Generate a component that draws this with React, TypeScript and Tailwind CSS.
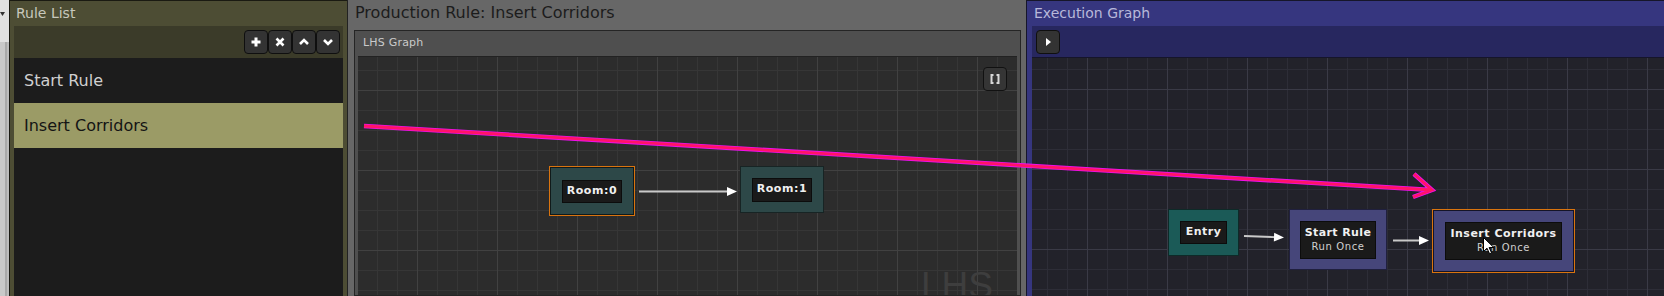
import React from "react";

const ToolBtn = ({ children }: { children: React.ReactNode }) => (
  <div className="w-[24px] h-[24px] rounded-[4px] border border-[#0f0f0f] bg-[#333333] flex items-center justify-center">
    {children}
  </div>
);

const Arrow = ({ x1, y1, x2, y2 }: { x1: number; y1: number; x2: number; y2: number }) => {
  const ang = Math.atan2(y2 - y1, x2 - x1);
  const bx = x2 - 10 * Math.cos(ang);
  const by = y2 - 10 * Math.sin(ang);
  const px = -Math.sin(ang) * 4.5;
  const py = Math.cos(ang) * 4.5;
  return (
    <g>
      <line x1={x1} y1={y1} x2={bx + 1} y2={by} stroke="#c9c9c9" strokeWidth={2} />
      <polygon points={`${x2},${y2} ${bx + px},${by + py} ${bx - px},${by - py}`} fill="#ffffff" />
    </g>
  );
};

export default function App() {
  return (
    <div className="w-[1664px] h-[296px] flex overflow-hidden bg-[#1e1e1e] font-['DejaVu_Sans',sans-serif] relative">
      {/* left strip from neighbouring window */}
      <div className="w-[9px] shrink-0 flex flex-col">
        <div className="h-[42px] bg-[#e1e1e1] relative">
          <svg className="absolute left-0 top-[12px]" width="5" height="5" viewBox="0 0 5 5">
            <polygon points="0,0 5,0 2.5,4" fill="#333" />
          </svg>
        </div>
        <div className="flex-1 flex">
          <div className="w-[5px] bg-[#c9c9c9]" />
          <div className="w-[2px] bg-[#a9a9a9]" />
          <div className="w-[2px] bg-[#bdbdbd]" />
        </div>
      </div>

      {/* Rule List panel */}
      <div className="w-[338px] shrink-0 border-l border-t border-[#1a1a12] bg-[#4d4d34] flex flex-col">
        <div className="h-[25px] pl-[6px] flex items-center text-[14px] text-[#c8c8bc]">Rule List</div>
        <div className="flex-1 mx-[4px] flex flex-col">
          <div className="h-[32px] bg-[#3b3b29] flex items-center justify-end pr-[3px]">
            <ToolBtn>
              <svg width="12" height="12" viewBox="0 0 12 12"><path d="M6 1.5V10.5M1.5 6H10.5" stroke="#fff" strokeWidth="3" /></svg>
            </ToolBtn>
            <ToolBtn>
              <svg width="12" height="12" viewBox="0 0 12 12"><path d="M2.5 2.5L9.5 9.5M9.5 2.5L2.5 9.5" stroke="#fff" strokeWidth="2.6" /></svg>
            </ToolBtn>
            <ToolBtn>
              <svg width="12" height="12" viewBox="0 0 12 12"><path d="M2 8L6 4L10 8" stroke="#fff" strokeWidth="2.6" fill="none" /></svg>
            </ToolBtn>
            <ToolBtn>
              <svg width="12" height="12" viewBox="0 0 12 12"><path d="M2 4L6 8L10 4" stroke="#fff" strokeWidth="2.6" fill="none" /></svg>
            </ToolBtn>
          </div>
          <div className="flex-1 bg-[#1c1c1c] flex flex-col">
            <div className="h-[45px] flex items-center pl-[10px] text-[16px] text-[#d0d0d0]">Start Rule</div>
            <div className="h-[45px] flex items-center pl-[10px] text-[16px] text-[#141414] bg-[#9b9b66]">Insert Corridors</div>
          </div>
        </div>
      </div>

      {/* Production Rule panel */}
      <div className="w-[679px] shrink-0 border-l border-[#222222] bg-[#676767] flex flex-col">
        <div className="h-[26px] pl-[7px] flex items-center text-[16px] text-[#1c1c1c]">Production Rule: Insert Corridors</div>
        <div className="flex-1 mt-[4px] ml-[6px] mr-[5px] border border-[#252525] bg-[#4f4f4f] flex flex-col">
          <div className="h-[25px] pl-[8px] flex items-center text-[11px] text-[#cacaca] tracking-[0.2px]">LHS Graph</div>
          <div className="flex-1 mx-[3px] border-t border-[#222] relative overflow-hidden bg-[#2c2c2c] bg-[linear-gradient(to_right,#414141_1px,transparent_1px),linear-gradient(to_bottom,#414141_1px,transparent_1px),linear-gradient(to_right,#363636_1px,transparent_1px),linear-gradient(to_bottom,#363636_1px,transparent_1px)] bg-[size:80px_80px,80px_80px,20px_20px,20px_20px] bg-[position:59px_33px,59px_33px,19px_13px,19px_13px]">
            {/* fit button */}
            <div className="absolute right-[10px] top-[10px] w-[24px] h-[24px] rounded-[4px] border border-[#111] bg-[#353535] flex items-center justify-center">
              <svg width="10" height="10" viewBox="0 0 10 10">
                <path d="M3.5 1H1.5V9H3.5M6.5 1H8.5V9H6.5" stroke="#d8d8d8" strokeWidth="2" fill="none" />
              </svg>
            </div>
            {/* edges */}
            <svg className="absolute left-0 top-0" width="660" height="240">
              <Arrow x1={281} y1={134.5} x2={379} y2={134.5} />
            </svg>
            {/* Room:0 selected */}
            <div className="absolute left-[191px] top-[109px] w-[86px] h-[50px] border border-[#d9740f] bg-[#101a1a] p-px">
              <div className="w-full h-full bg-[#2d4848] flex items-center justify-center">
                <div className="w-[60px] h-[23px] bg-[#1a1a1a] border border-[#0c0c0c] flex items-center justify-center text-[11px] font-bold text-[#f0f0f0] tracking-[0.6px]">Room:0</div>
              </div>
            </div>
            {/* Room:1 */}
            <div className="absolute left-[382px] top-[109px] w-[84px] h-[47px] border border-[#172424] bg-[#2d4848] flex items-center justify-center">
              <div className="w-[60px] h-[24px] bg-[#1a1a1a] border border-[#0c0c0c] flex items-center justify-center text-[11px] font-bold text-[#f0f0f0] tracking-[0.6px]">Room:1</div>
            </div>
            <div className="absolute left-[563px] top-[210px] text-[37px] leading-none text-[#3e3e3e] font-['Liberation_Sans',sans-serif]">LHS</div>
          </div>
        </div>
      </div>

      {/* Execution Graph panel */}
      <div className="flex-1 border-l border-t border-[#16162a] bg-[#36367f] flex flex-col">
        <div className="h-[25px] pl-[7px] flex items-center text-[14px] text-[#b8b8da]">Execution Graph</div>
        <div className="flex-1 pl-[5px] flex flex-col">
          <div className="h-[32px] bg-[#27275f] flex items-center pl-[4px] border-b border-[#15152a]">
            <div className="w-[24px] h-[24px] rounded-[4px] border border-[#0f0f0f] bg-[#333333] flex items-center justify-center">
              <svg width="10" height="10" viewBox="0 0 10 10"><polygon points="3,1 8,5 3,9" fill="#fff" /></svg>
            </div>
          </div>
          <div className="flex-1 relative overflow-hidden bg-[#22222a] bg-[linear-gradient(to_right,#3a3a46_1px,transparent_1px),linear-gradient(to_bottom,#3a3a46_1px,transparent_1px),linear-gradient(to_right,#2d2d37_1px,transparent_1px),linear-gradient(to_bottom,#2d2d37_1px,transparent_1px)] bg-[size:80px_80px,80px_80px,20px_20px,20px_20px] bg-[position:55px_31px,55px_31px,15px_11px,15px_11px]">
            <svg className="absolute left-0 top-0" width="632" height="240">
              <Arrow x1={212} y1={178} x2={252} y2={179.5} />
              <Arrow x1={361} y1={182.5} x2={397} y2={182.5} />
            </svg>
            {/* Entry */}
            <div className="absolute left-[136px] top-[151px] w-[71px] h-[47px] border border-[#0e2a28] bg-[#1b5a57] flex items-center justify-center">
              <div className="w-[47px] h-[23px] bg-[#1a1a1a] border border-[#0c0c0c] flex items-center justify-center text-[11px] font-bold text-[#f0f0f0] tracking-[0.5px]">Entry</div>
            </div>
            {/* Start Rule */}
            <div className="absolute left-[257px] top-[151px] w-[98px] h-[61px] border border-[#20203e] bg-[#46467a] flex items-center justify-center">
              <div className="w-[76px] h-[38px] bg-[#1a1a1a] border border-[#0c0c0c] flex flex-col items-center justify-center">
                <div className="text-[11px] font-bold text-[#f0f0f0] leading-[14px] tracking-[0.4px]">Start Rule</div>
                <div className="text-[10px] text-[#d0d0d0] leading-[14px] tracking-[0.6px]">Run Once</div>
              </div>
            </div>
            {/* Insert Corridors selected */}
            <div className="absolute left-[400px] top-[151px] w-[143px] h-[64px] border border-[#d9740f] bg-[#141428] p-px">
              <div className="w-full h-full bg-[#46467a] flex items-center justify-center">
                <div className="w-[117px] h-[38px] bg-[#1a1a1a] border border-[#0c0c0c] flex flex-col items-center justify-center">
                  <div className="text-[11px] font-bold text-[#f0f0f0] leading-[14px] tracking-[0.5px]">Insert Corridors</div>
                  <div className="text-[10px] text-[#d0d0d0] leading-[14px] tracking-[0.6px]">Run Once</div>
                </div>
              </div>
            </div>
            {/* mouse cursor */}
            <svg className="absolute left-[451px] top-[179px]" width="12" height="18" viewBox="0 0 12 18">
              <path d="M0.5 0.5V14.5L4 11.2L6.6 16.8L8.6 15.9L6.1 10.5H10.8Z" fill="#fff" stroke="#000" strokeWidth="1" />
            </svg>
          </div>
        </div>
      </div>

      {/* magenta annotation arrow */}
      <svg className="absolute left-0 top-0 pointer-events-none" width="1664" height="296">
        <g strokeLinecap="butt" strokeLinejoin="miter" fill="none">
          <path d="M364 126L1432 190M1414 174L1432 190L1413 197" stroke="#ee10ee" strokeWidth="4.5" />
          <path d="M364 126L1432 190M1414 174L1432 190L1413 197" stroke="#ff1466" strokeWidth="2.8" />
        </g>
      </svg>
    </div>
  );
}
